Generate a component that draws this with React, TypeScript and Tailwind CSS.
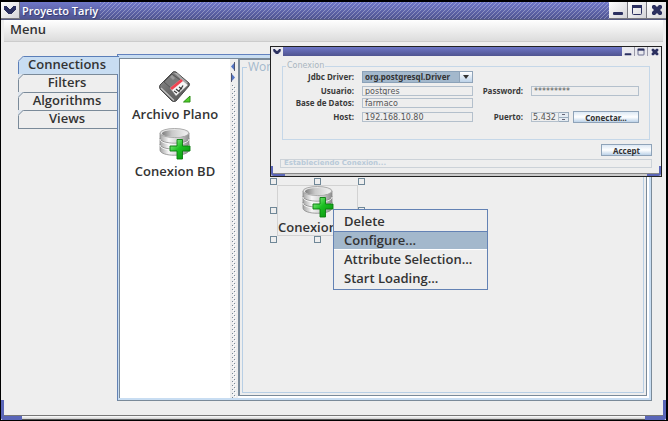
import type { ReactNode } from "react";

const uiFont = "font-['Open_Sans','Noto_Sans',sans-serif]";
const smallFont = "font-['Noto_Sans','DejaVu_Sans',sans-serif]";

const titleShade = "bg-linear-to-b from-[#6f77c8] to-[#4f5490]";
const stripes =
  "bg-[linear-gradient(135deg,rgba(255,255,255,0.3)_12.5%,transparent_12.5%,transparent_50%,rgba(255,255,255,0.3)_50%,rgba(255,255,255,0.3)_62.5%,transparent_62.5%)] bg-[length:4px_4px]";

function Chevron({ className }: { className: string }) {
  return (
    <svg viewBox="0 0 12 8" className={className} fill="#2b3060" aria-hidden="true">
      <path d="M0 0h3v1h1v1h1v1h2V2h1V1h1V0h3v4h-1v1h-1v1H9v1H8v1H4V7H3V6H2V5H1V4H0z" />
    </svg>
  );
}

function MinimizeGlyph({ className }: { className: string }) {
  return (
    <svg viewBox="0 0 12 12" className={className} aria-hidden="true">
      <rect x="1" y="8" width="10" height="3" rx="1" fill="#2b3060" />
    </svg>
  );
}

function MaximizeGlyph({ className }: { className: string }) {
  return (
    <svg viewBox="0 0 12 12" className={className} fill="none" stroke="#2b3060" aria-hidden="true">
      <rect x="1.5" y="1.5" width="9" height="9" rx="1" />
      <path d="M1 2.500h10" strokeWidth="3" />
    </svg>
  );
}

function CloseGlyph({ className }: { className: string }) {
  return (
    <svg viewBox="0 0 12 12" className={className} fill="#2b3060" aria-hidden="true">
      <path d="M2 1h2l2 2 2-2h2l1 1v2L9 6l2 2v2l-1 1H8L6 9l-2 2H2l-1-1V8l2-2-2-2V2z" />
    </svg>
  );
}

function FloppyIcon() {
  return (
    <svg viewBox="0 0 32 32" className="h-8 w-8 shrink-0" aria-hidden="true">
      <defs>
        <linearGradient id="disk" x1="0" y1="0" x2="1" y2="1">
          <stop offset="0" stopColor="#8e8e8e" />
          <stop offset="0.5" stopColor="#6a6a6a" />
          <stop offset="1" stopColor="#585858" />
        </linearGradient>
      </defs>
      <path d="M17 1 L30 12 Q31 13 30 15 L17 30 Q15 31 13 30 L1 18 Q0 16 1 14 L14 1 Q15 0 17 1z" fill="url(#disk)" stroke="#4a4a4a" />
      <path d="M2 17 L15 29.500" stroke="#c4c4c4" strokeWidth="1.200" />
      <path d="M15 2 L18 2 L29 12 L27 13z" fill="#a9a9a9" />
      <path d="M13 3 L21 9 L12 17 L5 11z" fill="#7b7b7b" stroke="#4d4d4d" strokeWidth="0.800" />
      <path d="M11 6 L13 4 L16 7 L14 9z" fill="#9b9b9b" />
      <path d="M11 17 L22 8 L29 14 L17 25z" fill="#f6f6f6" stroke="#8a8a8a" strokeWidth="0.500" />
      <path d="M11 17 L22 8 L24 10 L13 19z" fill="#f04452" />
      <path d="M15 20 L18 22 M17 18 L20 20.500 L22 17 M20 16 L23 18 M24 14.500 L22.500 17" fill="none" stroke="#3c3c3c" strokeWidth="1.300" />
      <path d="M31 25 V31 H24.500z" fill="#53cf2c" stroke="#2a8f15" />
    </svg>
  );
}

function DatabaseIcon() {
  return (
    <svg viewBox="0 0 32 32" className="h-8 w-8 shrink-0" aria-hidden="true">
      <defs>
        <linearGradient id="drum" x1="0" y1="0" x2="1" y2="0">
          <stop offset="0" stopColor="#a4a4a4" />
          <stop offset="0.300" stopColor="#f6f6f6" />
          <stop offset="0.700" stopColor="#c8c8c8" />
          <stop offset="1" stopColor="#8e8e8e" />
        </linearGradient>
        <linearGradient id="well" x1="0" y1="0" x2="1" y2="0">
          <stop offset="0" stopColor="#7d7d7d" />
          <stop offset="0.400" stopColor="#c9c9c9" />
          <stop offset="1" stopColor="#f0f0f0" />
        </linearGradient>
        <linearGradient id="plus" x1="0" y1="0" x2="1" y2="1">
          <stop offset="0" stopColor="#a8f5a0" />
          <stop offset="0.450" stopColor="#1cc022" />
          <stop offset="1" stopColor="#078a0c" />
        </linearGradient>
      </defs>
      <path d="M1 5 V22 C1 29 30 29 30 22 V5z" fill="url(#drum)" stroke="#8a8a8a" strokeWidth="0.800" />
      <ellipse cx="15.500" cy="5" rx="14.500" ry="4.500" fill="#e6e6e6" stroke="#9a9a9a" strokeWidth="0.800" />
      <ellipse cx="15.500" cy="5.500" rx="12.500" ry="3.500" fill="url(#well)" />
      <path d="M1 10 C1 17 30 17 30 10 M1 16 C1 23 30 23 30 16" fill="none" stroke="#8f8f8f" strokeWidth="0.900" />
      <path d="M1 11 C1 18 30 18 30 11 M1 17 C1 24 30 24 30 17" fill="none" stroke="#fff" strokeWidth="0.800" />
      <path d="M18 11.500 H23.500 V18 H31 V23 H23.500 V31 H18 V23 H11 V18 H18z" fill="url(#plus)" stroke="#0a7d0f" strokeWidth="0.900" />
    </svg>
  );
}

function WindowButton({ label, children }: { label: string; children: ReactNode }) {
  return (
    <button
      type="button"
      aria-label={label}
      className="flex w-[19px] items-center justify-center border-r border-b border-[#77777f] bg-linear-to-br from-white to-[#d4d4d8] last:border-r-0"
    >
      {children}
    </button>
  );
}

function SmallWindowButton({ label, children }: { label: string; children: ReactNode }) {
  return (
    <button
      type="button"
      aria-label={label}
      className="flex w-[13px] items-center justify-center border-r border-[#9a9aa8] bg-[#e9e9ee] last:border-r-0"
    >
      {children}
    </button>
  );
}

function Tab({ label, active = false }: { label: string; active?: boolean }) {
  return (
    <button
      type="button"
      role="tab"
      aria-selected={active}
      className={`relative flex h-[18px] justify-center border-t border-l text-[13px] leading-[15px] font-semibold ${
        active ? "z-10 w-[calc(100%+2px)] border-[#5b7fb9] bg-[#c8ddf2] pr-[4px]" : "w-full border-[#7a8a99] bg-[#eee] pr-[2px]"
      }`}
    >
      <svg viewBox="0 0 6 6" className="absolute -top-px -left-px h-[6px] w-[6px]" aria-hidden="true">
        <path d="M0 0h6L0 6z" fill={active ? "#eee" : "#dfe6ee"} />
        <path d="M0 5.500L5.500 0" stroke={active ? "#5b7fb9" : "#7a8a99"} />
      </svg>
      {label}
    </button>
  );
}

function PaletteItem({ label, children }: { label: string; children: ReactNode }) {
  return (
    <div className="flex h-[57px] flex-col items-center">
      {children}
      <span className="mt-[2px] text-[13px] leading-[18px] font-semibold whitespace-nowrap">{label}</span>
    </div>
  );
}

const fieldClass =
  "h-[10px] w-full min-w-0 border border-[#b4c0cc] bg-[#eee] px-[2px] font-['DejaVu_Sans',sans-serif] text-[8px] leading-[8px] text-[#555]";
const labelClass = "text-right text-[8px] leading-[10px] font-bold whitespace-nowrap text-[#3a3a3a]";
const smallButton =
  "border border-[#8fa3b8] bg-linear-to-b from-[#dce8f4] via-white to-[#bcd2e8] text-center text-[8px] leading-[9px] font-bold text-[#333]";

function ConnectionDialog() {
  return (
    <section
      aria-label="Conexion"
      className={`absolute top-[44px] left-[269px] flex h-[131px] w-[392px] flex-col border border-[#222] bg-[#eee] ${smallFont}`}
    >
      <header className={`flex h-[9px] ${titleShade}`}>
        <button type="button" aria-label="Menu de ventana" className="flex w-3 items-center justify-center bg-[#e9e9ee]">
          <Chevron className="h-[5px] w-[8px]" />
        </button>
        <div className="flex-1" />
        <SmallWindowButton label="Minimizar"><MinimizeGlyph className="h-2 w-2" /></SmallWindowButton>
        <SmallWindowButton label="Maximizar"><MaximizeGlyph className="h-2 w-2" /></SmallWindowButton>
        <SmallWindowButton label="Cerrar"><CloseGlyph className="h-2 w-2" /></SmallWindowButton>
      </header>

      <form className="flex flex-1 flex-col px-[9px] pt-[5px]" onSubmit={(e) => e.preventDefault()}>
        <fieldset className="mx-[2px] h-[79px] border border-[#c5d7e8]">
          <legend className="ml-[3px] px-[1px] font-['DejaVu_Sans',sans-serif] text-[8px] leading-[10px] text-[#a9b5c0]">Conexion</legend>
          <div className="grid grid-cols-[71px_111px_42px_1fr] gap-x-[8px] pr-[10px]">
            <label htmlFor="driver" className={`${labelClass} pt-[1px]`}>Jdbc Driver:</label>
            <div className="relative h-[12px]">
              <select
                id="driver"
                className="block h-[12px] w-full appearance-none border border-[#8ba2b9] bg-[#a3b8cc] px-[2px] text-[8px] leading-[10px] font-bold text-[#333]"
              >
                <option>org.postgresql.Driver</option>
              </select>
              <span className="pointer-events-none absolute top-0 right-0 flex h-[12px] w-[14px] items-center justify-center border border-[#8fa3b8] bg-linear-to-b from-white to-[#bcd2e8]">
                <svg viewBox="0 0 8 4" className="h-[4px] w-[8px]" aria-hidden="true"><path d="M1 0h6L4 4z" fill="#333" /></svg>
              </span>
            </div>
            <span className="col-span-2" />

            <label htmlFor="user" className={`${labelClass} mt-[3px]`}>Usuario:</label>
            <input id="user" defaultValue="postgres" className={`${fieldClass} mt-[3px]`} />
            <label htmlFor="password" className={`${labelClass} mt-[3px]`}>Password:</label>
            <input id="password" defaultValue="*********" className={`${fieldClass} mt-[3px]`} />

            <label htmlFor="database" className={`${labelClass} mt-[2px]`}>Base de Datos:</label>
            <input id="database" defaultValue="farmaco" className={`${fieldClass} mt-[2px]`} />
            <span className="col-span-2" />

            <label htmlFor="host" className={`${labelClass} mt-[4px]`}>Host:</label>
            <input id="host" defaultValue="192.168.10.80" className={`${fieldClass} mt-[4px]`} />
            <label htmlFor="port" className={`${labelClass} mt-[4px]`}>Puerto:</label>
            <div className="mt-[3px] flex items-center">
              <input id="port" defaultValue="5.432" className="h-[10px] w-[28px] border border-[#b4c0cc] px-[1px] font-['DejaVu_Sans',sans-serif] text-[8px] leading-[8px] text-[#555]" />
              <div className="flex h-[10px] w-[10px] flex-col border border-l-0 border-[#9aabbc] bg-[#e4ebf2]">
                <button type="button" aria-label="Subir" className="flex flex-1 items-center justify-center border-b border-[#9aabbc]"><span className="h-px w-[3px] bg-[#667]" /></button>
                <button type="button" aria-label="Bajar" className="flex flex-1 items-center justify-center"><span className="h-px w-[3px] bg-[#667]" /></button>
              </div>
              <button type="button" className={`${smallButton} ml-[4px] h-[12px] flex-1`}>Conectar...</button>
            </div>
          </div>
        </fieldset>
        <button type="submit" className={`${smallButton} mt-[4px] h-[12px] w-[51px] self-end`}>Accept</button>
        <output className="mt-[3px] h-[9px] border border-[#ccd2d8] px-[3px] font-['DejaVu_Sans',sans-serif] text-[7px] leading-[7px] font-bold text-[#b9cad9]">
          Estableciendo Conexion...
        </output>
      </form>
      <div className="h-[3px] border-t border-[#888] bg-[#ccc]" />
      <Corners size="small" />
    </section>
  );
}

function Corners({ size }: { size: "small" | "large" }) {
  const box = size === "small" ? "h-[10px] w-[14px] border-b-2" : "h-[20px] w-[21px] border-b-4";
  const left = size === "small" ? "border-l-2" : "border-l-3";
  const right = size === "small" ? "border-r-2" : "border-r-3";
  return (
    <>
      <span className={`pointer-events-none absolute bottom-0 left-0 rounded-bl-[3px] border-[#5a66b8] ${box} ${left}`} />
      <span className={`pointer-events-none absolute right-0 bottom-0 rounded-br-[3px] border-[#5a66b8] ${box} ${right}`} />
    </>
  );
}

function Handle({ className }: { className: string }) {
  return <span className={`absolute h-[7px] w-[7px] border border-[#6f8797] bg-[#eee] ${className}`} />;
}

function SelectedNode() {
  return (
    <div className="absolute top-[176px] left-[269px] h-[65px] w-[95px]">
      <div className="m-[7px] flex h-[51px] w-[81px] flex-col items-start border border-[#d2d2d2]">
        <span className="self-center"><DatabaseIcon /></span>
        <span className="text-[13px] leading-[18px] font-semibold whitespace-nowrap">Conexion BD</span>
      </div>
      <Handle className="top-0 left-0" />
      <Handle className="top-0 left-[44px]" />
      <Handle className="top-0 left-[88px]" />
      <Handle className="top-[29px] left-0" />
      <Handle className="top-[29px] left-[88px]" />
      <Handle className="top-[58px] left-0" />
      <Handle className="top-[58px] left-[44px]" />
      <Handle className="top-[58px] left-[88px]" />
    </div>
  );
}

const menuItems = ["Delete", "Configure...", "Attribute Selection...", "Start Loading..."];

function ContextMenu() {
  return (
    <div role="menu" className="absolute top-[207px] left-[332px] w-[155px] border border-[#6382b4] bg-[#eee] pt-[2px] pb-[1px]">
      {menuItems.map((item) => (
        <button
          key={item}
          type="button"
          role="menuitem"
          className={`flex h-[19px] w-full border-y pl-[10px] text-[13px] leading-[16px] font-semibold ${
            item === "Configure..." ? "border-t-[#6382b4] border-b-white bg-[#a3b8cc]" : "border-transparent"
          }`}
        >
          {item}
        </button>
      ))}
    </div>
  );
}

function SplitDivider() {
  return (
    <div className="flex w-[8px] flex-col bg-[#eee]">
      <svg viewBox="0 0 8 26" className="h-[26px] w-[8px]" aria-hidden="true">
        <path d="M5 3v9L1 7.500z" fill="#5475c4" />
        <path d="M1 14v9L5 18.500z" fill="#5475c4" />
        <path d="M4.500 3v9M1.500 14v9" stroke="#4a4a5a" strokeWidth="0.800" />
      </svg>
      <svg className="w-full flex-1" aria-hidden="true">
        <defs>
          <pattern id="bumps" width="4" height="4" patternUnits="userSpaceOnUse" x="2">
            <path d="M0 0h1v1H0zM2 2h1v1H2z" fill="#7a8a99" />
            <path d="M1 1h1v1H1zM3 3h1v1H3z" fill="#fff" />
          </pattern>
        </defs>
        <rect x="2" width="4" height="100%" fill="url(#bumps)" shapeRendering="crispEdges" />
      </svg>
    </div>
  );
}

export default function App() {
  return (
    <main className={`relative flex min-h-screen flex-col border-t-2 border-r-2 border-b border-l border-black bg-[#eee] text-[#333] ${uiFont}`}>
      <header className={`flex h-[18px] border-b border-[#555a80] ${titleShade}`}>
        <WindowButton label="Window menu"><Chevron className="h-2 w-3" /></WindowButton>
        <h1 className="px-[2px] text-[11px] leading-[17px] font-semibold text-white [text-shadow:1px_1px_1px_#333a70]">
          Proyecto Tariy
        </h1>
        <div className={`flex-1 ${stripes}`} />
        <WindowButton label="Minimize"><MinimizeGlyph className="h-3 w-3" /></WindowButton>
        <WindowButton label="Maximize"><MaximizeGlyph className="h-3 w-3" /></WindowButton>
        <WindowButton label="Close"><CloseGlyph className="h-3 w-3" /></WindowButton>
      </header>

      <nav className="mx-[3px] flex h-[22px] border-b border-[#ccc] bg-linear-to-b from-white to-[#dcdcdc]">
        <button type="button" className="self-start px-[6px] text-[13px] leading-[19px] font-semibold">Menu</button>
      </nav>

      <div className="flex flex-1 pt-[12px] pr-[14px] pb-[14px] pl-[17px]">
        <div role="tablist" className="mt-[2px] w-[99px] self-start border-b border-[#7a8a99]">
          <Tab label="Connections" active />
          <Tab label="Filters" />
          <Tab label="Algorithms" />
          <Tab label="Views" />
        </div>

        <div className="flex flex-1 border border-t-[#6382bf] border-r-[#7a8a99] border-b-[#7a8a99] border-l-[#6382b4] bg-[#c8ddf2] pt-[3px] pr-[2px] pb-[2px] pl-px">
          <div className="flex flex-1 border-t border-l border-[#7a8a99] bg-white">
            <aside className="w-[110px] pt-[12px]">
              <PaletteItem label="Archivo Plano"><FloppyIcon /></PaletteItem>
              <PaletteItem label="Conexion BD"><DatabaseIcon /></PaletteItem>
            </aside>

            <SplitDivider />

            <div className="mr-[2px] mb-[2px] flex flex-1 border-t border-r border-b border-l-2 border-[#7a8a99] bg-[#eee]">
              <fieldset className="mr-[2px] mb-[2px] ml-[2px] flex-1 border border-[#b8cfe5]">
                <legend className="ml-[4px] px-[1px] text-[12px] leading-[14px] text-[#a3b8cc]">Work</legend>
              </fieldset>
            </div>
          </div>
        </div>
      </div>

      <footer className="mx-[3px] h-[5px] border-t border-b border-t-[#777] border-b-[#555] bg-linear-to-b from-white to-[#ccc]" />
      <Corners size="large" />

      <SelectedNode />
      <ConnectionDialog />
      <ContextMenu />
    </main>
  );
}
